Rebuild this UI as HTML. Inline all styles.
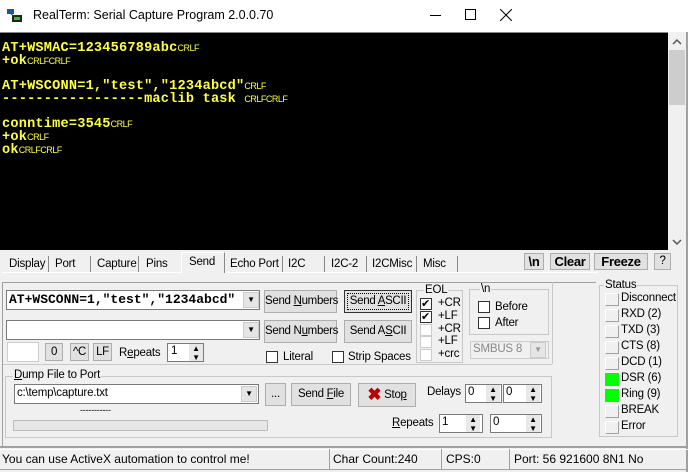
<!DOCTYPE html><html><head><style>
*{margin:0;padding:0;box-sizing:border-box}
body{width:688px;height:470px;background:#f0f0f0;font-family:"Liberation Sans",sans-serif;font-size:11.5px;letter-spacing:-0.2px;color:#000;position:relative;overflow:hidden}
.a{position:absolute}
.t{white-space:nowrap}
#term{left:0;top:32px;width:668px;height:218px;background:#000;border-top:1px solid #888}
#term pre{position:absolute;left:2px;top:9px;font-family:"Liberation Mono",monospace;font-weight:bold;font-size:13.6px;line-height:12px;color:#ffff40;letter-spacing:0.2px}
small{font-size:9px;font-weight:normal;letter-spacing:-0.5px;font-family:"Liberation Sans",sans-serif}
.btn{position:absolute;background:#e1e1e1;border:1px solid #adadad;text-align:center;line-height:20px;white-space:nowrap;letter-spacing:-0.3px}
.inp{position:absolute;background:#fff;border:1px solid #7a7a7a}
.cb{position:absolute;width:12px;height:12px;background:#fff;border:1px solid #333}
.grp{position:absolute;border:1px solid #c8c8c8}
.lbl{position:absolute;background:#f0f0f0;padding:0 1px;line-height:12px;white-space:nowrap}
.spin{position:absolute;width:14px;background:#e8e8e8;font-size:8px;text-align:center;line-height:9px}
.led{position:absolute;width:14px;height:13px;border-left:1px solid #fff;border-top:1px solid #fff;border-right:1px solid #a0a0a0;border-bottom:1px solid #a0a0a0}
.dd{position:absolute;width:16px;background:#e5e5e5;border:1px solid #ccc;font-size:8px;text-align:center}
</style></head><body>
<div class="a" style="left:0;top:0;width:688px;height:32px;background:#fff"></div>
<svg class="a" style="left:7px;top:8px" width="16" height="16"><rect x="0" y="1" width="7" height="5" fill="#1a5a9a"/><rect x="5" y="7" width="10" height="7" fill="#222"/><rect x="7" y="9" width="6" height="3" fill="#2c2"/><line x1="4" y1="6" x2="8" y2="9" stroke="#333"/></svg>
<div class="a t" style="left:33px;top:8px;font-size:12.5px;letter-spacing:0">RealTerm: Serial Capture Program 2.0.0.70</div>
<div class="a" style="left:430px;top:15px;width:11px;height:1px;background:#000"></div>
<div class="a" style="left:465px;top:9px;width:11px;height:11px;border:1px solid #000"></div>
<svg class="a" style="left:500px;top:9px" width="12" height="12"><path d="M0 0L12 12M12 0L0 12" stroke="#000"/></svg>
<div id="term" class="a"><pre>AT+WSMAC=123456789abc<small>CRLF</small>
+ok<small>CRLFCRLF</small>

AT+WSCONN=1,"test","1234abcd"<small>CRLF</small>
-----------------maclib task <small>CRLFCRLF</small>

conntime=3545<small>CRLF</small>
+ok<small>CRLF</small>
ok<small>CRLFCRLF</small></pre></div>
<div class="a" style="left:668px;top:32px;width:18px;height:218px;background:#f0f0f0"></div>
<svg class="a" style="left:672px;top:38px" width="10" height="8"><path d="M1 6L5 2L9 6" stroke="#555" fill="none" stroke-width="1.5"/></svg>
<div class="a" style="left:669px;top:50px;width:16px;height:55px;background:#cdcdcd"></div>
<svg class="a" style="left:672px;top:238px" width="10" height="8"><path d="M1 2L5 6L9 2" stroke="#555" fill="none" stroke-width="1.5"/></svg>
<div class="a" style="left:686px;top:32px;width:2px;height:440px;background:#a0a0a0"></div>
<!-- tabs -->
<div class="a" style="left:2px;top:272px;width:596px;height:1px;background:#fff"></div>
<div class="a t" style="left:9px;top:258px">Display</div><div class="a" style="left:48px;top:256px;width:1px;height:16px;background:#888"></div>
<div class="a t" style="left:55px;top:258px">Port</div><div class="a" style="left:90px;top:256px;width:1px;height:16px;background:#888"></div>
<div class="a t" style="left:97px;top:258px">Capture</div><div class="a" style="left:138px;top:256px;width:1px;height:16px;background:#888"></div>
<div class="a t" style="left:146px;top:258px">Pins</div>
<div class="a" style="left:181px;top:252px;width:44px;height:21px;background:#f0f0f0;border-top:1px solid #fff;border-left:1px solid #fff;border-right:1px solid #888"></div>
<div class="a t" style="left:189px;top:256px">Send</div>
<div class="a t" style="left:230px;top:258px">Echo Port</div><div class="a" style="left:282px;top:256px;width:1px;height:16px;background:#888"></div>
<div class="a t" style="left:288px;top:258px">I2C</div><div class="a" style="left:324px;top:256px;width:1px;height:16px;background:#888"></div>
<div class="a t" style="left:331px;top:258px">I2C-2</div><div class="a" style="left:366px;top:256px;width:1px;height:16px;background:#888"></div>
<div class="a t" style="left:372px;top:258px">I2CMisc</div><div class="a" style="left:416px;top:256px;width:1px;height:16px;background:#888"></div>
<div class="a t" style="left:423px;top:258px">Misc</div><div class="a" style="left:457px;top:256px;width:1px;height:16px;background:#888"></div>
<div class="btn" style="left:524px;top:253px;width:20px;height:17px;line-height:15px;font-weight:bold;font-size:13px">\n</div>
<div class="btn" style="left:550px;top:253px;width:40px;height:17px;line-height:15px;font-weight:bold;font-size:13px">Clear</div>
<div class="btn" style="left:594px;top:253px;width:54px;height:17px;line-height:15px;font-weight:bold;font-size:13px">Freeze</div>
<div class="btn" style="left:654px;top:253px;width:17px;height:17px;line-height:15px">?</div>
<!-- panel -->
<div class="a" style="left:2px;top:282px;width:594px;height:1px;background:#a0a0a0"></div>
<div class="a" style="left:2px;top:282px;width:1px;height:164px;background:#a0a0a0"></div>
<div class="inp" style="left:6px;top:290px;width:254px;height:20px"></div>
<div class="a t" style="left:9px;top:292px;font-family:'Liberation Mono',monospace;font-weight:bold;font-size:13px;letter-spacing:0">AT+WSCONN=1,"test","1234abcd"</div>
<div class="dd" style="left:243px;top:292px;height:16px;line-height:14px">&#9660;</div>
<div class="btn" style="left:264px;top:290px;width:73px;height:23px;line-height:21px">Send <u>N</u>umbers</div>
<div class="btn" style="left:344px;top:290px;width:68px;height:23px;line-height:21px;border:1px solid #333;outline:1px dotted #000;outline-offset:-4px">Send <u>A</u>SCII</div>
<div class="inp" style="left:6px;top:320px;width:254px;height:20px"></div>
<div class="dd" style="left:243px;top:322px;height:16px;line-height:14px">&#9660;</div>
<div class="btn" style="left:264px;top:320px;width:73px;height:23px;line-height:21px">Send N<u>u</u>mbers</div>
<div class="btn" style="left:344px;top:320px;width:68px;height:23px;line-height:21px">Send A<u>S</u>CII</div>
<div class="inp" style="left:7px;top:342px;width:32px;height:20px;border-color:#ccc"></div>
<div class="btn" style="left:45px;top:343px;width:18px;height:18px;line-height:16px">0</div>
<div class="btn" style="left:70px;top:343px;width:19px;height:18px;line-height:16px">^C</div>
<div class="btn" style="left:93px;top:343px;width:19px;height:18px;line-height:16px">LF</div>
<div class="a t" style="left:119px;top:347px">R<u>e</u>peats</div>
<div class="inp" style="left:167px;top:343px;width:37px;height:19px"></div><div class="a t" style="left:171px;top:345px">1</div>
<div class="spin" style="left:189px;top:344px;height:17px">&#9650;<br>&#9660;</div>
<div class="cb" style="left:266px;top:351px"></div><div class="a t" style="left:283px;top:351px">Literal</div>
<div class="cb" style="left:332px;top:351px"></div><div class="a t" style="left:348px;top:351px">Strip Spaces</div>
<!-- EOL -->
<div class="grp" style="left:416px;top:290px;width:47px;height:73px"></div><div class="lbl" style="left:424px;top:284px">EOL</div>
<div class="cb" style="left:420px;top:298px;font-size:11px;line-height:10px">&#10004;</div><div class="a t" style="left:438px;top:297px">+CR</div>
<div class="cb" style="left:420px;top:311px;font-size:11px;line-height:10px">&#10004;</div><div class="a t" style="left:438px;top:310px">+LF</div>
<div class="cb" style="left:420px;top:324px;border-color:#ccc"></div><div class="a t" style="left:438px;top:323px">+CR</div>
<div class="cb" style="left:420px;top:336px;border-color:#ccc"></div><div class="a t" style="left:438px;top:335px">+LF</div>
<div class="cb" style="left:420px;top:349px;border-color:#ccc"></div><div class="a t" style="left:438px;top:348px">+crc</div>
<div class="grp" style="left:469px;top:289px;width:80px;height:46px"></div><div class="lbl" style="left:480px;top:283px">\n</div>
<div class="cb" style="left:478px;top:301px"></div><div class="a t" style="left:495px;top:301px">Before</div>
<div class="cb" style="left:478px;top:317px"></div><div class="a t" style="left:495px;top:317px">After</div>
<div class="a" style="left:470px;top:341px;width:79px;height:18px;border:1px solid #ccc;background:#f0f0f0"></div>
<div class="a t" style="left:473px;top:343px;color:#888">SMBUS 8</div>
<div class="dd" style="left:530px;top:342px;height:16px;line-height:14px;color:#999">&#9660;</div>
<div class="a" style="left:552px;top:282px;width:1px;height:82px;background:#c8c8c8"></div>
<div class="a" style="left:3px;top:364px;width:549px;height:1px;background:#c8c8c8"></div>
<!-- dump -->
<div class="grp" style="left:5px;top:376px;width:547px;height:62px"></div><div class="lbl" style="left:13px;top:369px"><u>D</u>ump File to Port</div>
<div class="inp" style="left:14px;top:384px;width:245px;height:20px"></div><div class="a t" style="left:17px;top:387px">c:\temp\capture.txt</div>
<div class="dd" style="left:241px;top:386px;height:16px;line-height:14px">&#9660;</div>
<div class="btn" style="left:265px;top:383px;width:21px;height:23px">...</div>
<div class="btn" style="left:291px;top:383px;width:60px;height:23px;line-height:21px">Send <u>F</u>ile</div>
<div class="btn" style="left:358px;top:383px;width:58px;height:24px;line-height:22px"><b style="color:#b00;font-size:17px;vertical-align:-2px">&#10006;</b> Sto<u>p</u></div>
<div class="a t" style="left:427px;top:386px">Delays</div>
<div class="inp" style="left:465px;top:384px;width:37px;height:19px"></div><div class="a t" style="left:468px;top:386px">0</div><div class="spin" style="left:486px;top:385px;height:17px">&#9650;<br>&#9660;</div>
<div class="inp" style="left:503px;top:384px;width:39px;height:19px"></div><div class="a t" style="left:506px;top:386px">0</div><div class="spin" style="left:526px;top:385px;height:17px">&#9650;<br>&#9660;</div>
<div class="a t" style="left:80px;top:405px;font-size:9px">-----------</div>
<div class="a" style="left:13px;top:420px;width:255px;height:11px;border:1px solid #bcbcbc;background:#e6e6e6"></div>
<div class="a t" style="left:392px;top:417px"><u>R</u>epeats</div>
<div class="inp" style="left:439px;top:414px;width:44px;height:19px"></div><div class="a t" style="left:442px;top:416px">1</div><div class="spin" style="left:466px;top:415px;height:17px">&#9650;<br>&#9660;</div>
<div class="inp" style="left:490px;top:414px;width:52px;height:19px"></div><div class="a t" style="left:493px;top:416px">0</div><div class="spin" style="left:526px;top:415px;height:17px">&#9650;<br>&#9660;</div>
<!-- status -->
<div class="grp" style="left:599px;top:285px;width:79px;height:152px"></div><div class="lbl" style="left:604px;top:279px">Status</div>
<div class="led" style="left:605px;top:293px"></div><div class="a t" style="left:621px;top:292px">Disconnect</div>
<div class="led" style="left:605px;top:309px"></div><div class="a t" style="left:621px;top:308px">RXD (2)</div>
<div class="led" style="left:605px;top:325px"></div><div class="a t" style="left:621px;top:324px">TXD (3)</div>
<div class="led" style="left:605px;top:341px"></div><div class="a t" style="left:621px;top:340px">CTS (8)</div>
<div class="led" style="left:605px;top:357px"></div><div class="a t" style="left:621px;top:356px">DCD (1)</div>
<div class="led" style="left:605px;top:373px;background:#00ff00;border-color:#00ff00"></div><div class="a t" style="left:621px;top:372px">DSR (6)</div>
<div class="led" style="left:605px;top:389px;background:#00ff00;border-color:#00ff00"></div><div class="a t" style="left:621px;top:388px">Ring (9)</div>
<div class="led" style="left:605px;top:405px"></div><div class="a t" style="left:621px;top:404px">BREAK</div>
<div class="led" style="left:605px;top:421px"></div><div class="a t" style="left:621px;top:420px">Error</div>
<!-- status bar -->
<div class="a" style="left:0;top:446px;width:688px;height:2px;background:#a0a0a0"></div>
<div class="a" style="left:0;top:449px;width:688px;height:21px;border-top:1px solid #fff"></div>
<div class="a t" style="left:2px;top:452px;font-size:12px;letter-spacing:0">You can use ActiveX automation to control me!</div>
<div class="a" style="left:329px;top:449px;width:1px;height:20px;background:#a0a0a0"></div>
<div class="a t" style="left:333px;top:452px;font-size:12px;letter-spacing:0">Char Count:240</div>
<div class="a" style="left:441px;top:449px;width:1px;height:20px;background:#a0a0a0"></div>
<div class="a t" style="left:446px;top:452px;font-size:12px;letter-spacing:0">CPS:0</div>
<div class="a" style="left:509px;top:449px;width:1px;height:20px;background:#a0a0a0"></div>
<div class="a t" style="left:514px;top:452px;font-size:12px;letter-spacing:0">Port: 56 921600 8N1 No</div>
<div class="a" style="left:0;top:469px;width:688px;height:1px;background:#a0a0a0"></div>
</body></html>
